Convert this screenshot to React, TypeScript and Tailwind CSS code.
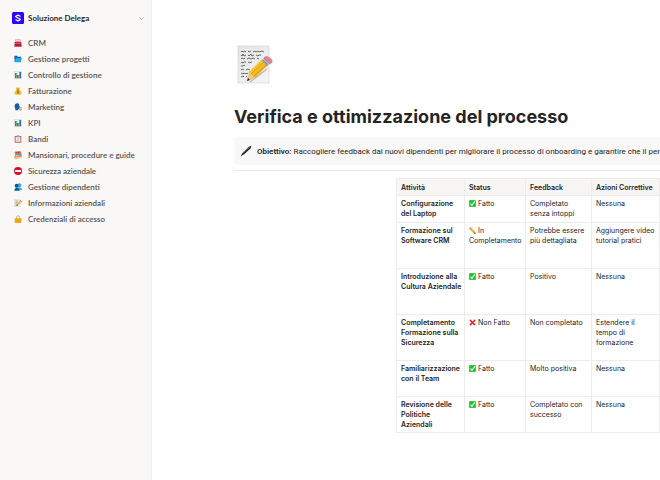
import type { ReactNode } from "react";
import { ChevronDown } from "lucide-react";

function Glyph({ className, children }: { className: string; children: ReactNode }) {
  return (
    <svg viewBox="0 0 24 24" className={`shrink-0 ${className}`} aria-hidden="true">
      {children}
    </svg>
  );
}

const chart = (
  <>
    <path d="M1 1h22v22H1z" fill="#eef3f5" stroke="#b9c8cd" strokeWidth="1.5" />
    <path d="M3 6h5v16H3z" fill="#12a044" />
    <path d="M9 12h5v10H9z" fill="#e0303a" />
    <path d="M16 3h5v19h-5z" fill="#1b74c9" />
  </>
);

const icons = {
  crm: (
    <>
      <path d="M4 1h16v9H4z" fill="#e0959b" />
      <path d="M6 3h12v3H6z" fill="#f3d6d8" />
      <path d="M2 9h20l1 14H1z" fill="#bd1e35" />
      <path d="M2 13h20" stroke="#ec8d97" strokeWidth="2" />
      <path d="M9 16h6v3H9z" fill="#8c1428" />
    </>
  ),
  folder: (
    <>
      <path d="M1 2h8l2 3h10v16H2z" fill="#0669a8" />
      <path d="M6 9h18l-4 13H2z" fill="#22a7f0" />
    </>
  ),
  chart,
  money: (
    <>
      <path d="M8 1l3 2 4-2 2 1-2 5H9L6 2z" fill="#e3a72f" />
      <path d="M9 7h6c4 3 8 8 8 12 0 3-2 4-5 4H6c-3 0-5-1-5-4 0-4 4-9 8-12z" fill="#f2bd35" />
      <path d="M8 7h8" stroke="#a76d13" strokeWidth="2" />
      <path d="M15 12c-5-2-7 2-3 3s3 5-3 3M12 10v10" fill="none" stroke="#8a5a15" strokeWidth="2" />
    </>
  ),
  speaking: (
    <>
      <path d="M11 1C4 1 1 6 2 11c0 3 2 4 2 7v4h8v-3h4v-5l2-2-2-3C16 4 15 1 11 1z" fill="#1561a6" />
      <path d="M17 15l6-2M17 18l7 0M16 20l6 3" stroke="#b5622f" strokeWidth="2" />
    </>
  ),
  clipboard: (
    <>
      <rect x="2" y="3" width="20" height="20" rx="2" fill="#d95e4c" />
      <path d="M5 6h14v14H5z" fill="#f2f5f7" />
      <path d="M8 1h8v6H8z" fill="#92a4ae" />
      <path d="M8 11h8M8 14h8M8 17h5" stroke="#9cacb7" strokeWidth="1.5" />
    </>
  ),
  books: (
    <>
      <path d="M2 2l17-1 3 4-17 2z" fill="#ba4a3f" />
      <path d="M2 3l3 4 17-2v4L5 11 2 7z" fill="#df7058" />
      <path d="M4 10l17-2 2 3v4L6 17l-2-3z" fill="#477fae" />
      <path d="M6 12l16-1v2L6 15z" fill="#f2ead7" />
      <path d="M1 16l18-2 4 3v4L5 23l-4-3z" fill="#e48b37" />
      <path d="M5 19l17-1v2L5 21z" fill="#fff2d7" />
    </>
  ),
  noEntry: (
    <>
      <circle cx="12" cy="12" r="12" fill="#d90d2b" />
      <rect x="3" y="9" width="18" height="6" rx="1" fill="#fff" />
    </>
  ),
  people: (
    <>
      <circle cx="16" cy="7" r="6" fill="#35aff2" />
      <path d="M10 14c7-3 13 0 14 7H10z" fill="#35aff2" />
      <circle cx="8" cy="8" r="6" fill="#075b91" />
      <path d="M1 23c0-12 15-12 16 0z" fill="#075b91" />
    </>
  ),
  memo: (
    <>
      <path d="M1 2h17v21H1z" fill="#eef1f3" stroke="#aeb7bd" />
      <path d="M4 6h10M4 10h8M4 14h5M4 18h4" stroke="#717b82" strokeWidth="1.5" />
      <path d="M9 15L18 5l4 4-10 10-4 1z" fill="#f0b41e" />
      <path d="M18 5l2-2 4 4-2 2z" fill="#e66c78" />
      <path d="M9 15l3 4-5 2z" fill="#444" />
    </>
  ),
  lock: (
    <>
      <path d="M7 12V8c0-7 10-7 10 0v4" fill="none" stroke="#a9a9a7" strokeWidth="3" />
      <rect x="2" y="10" width="20" height="14" rx="3" fill="#f6a313" />
    </>
  ),
  check: (
    <>
      <rect x="1" y="1" width="22" height="22" rx="2" fill="#12c52b" stroke="#079120" />
      <path d="M5 12l5 6L20 5" fill="none" stroke="#fff" strokeWidth="4" />
    </>
  ),
  cross: <path d="M2 5l3-3 7 7 7-7 3 3-7 7 7 7-3 3-7-7-7 7-3-3 7-7z" fill="#e4172b" stroke="#e4172b" />,
  pencil: (
    <>
      <path d="M6 1l15 15 2 7-8-2L1 7z" fill="#f3bb1f" />
      <path d="M4 4l14 15" stroke="#c98a18" />
      <path d="M5 0L0 6l4 3 5-5z" fill="#e98b90" />
      <path d="M21 17l-4 4 6 2z" fill="#494035" />
    </>
  ),
};

type IconName = keyof typeof icons;

const pages: { icon: IconName; label: string }[] = [
  { icon: "crm", label: "CRM" },
  { icon: "folder", label: "Gestione progetti" },
  { icon: "chart", label: "Controllo di gestione" },
  { icon: "money", label: "Fatturazione" },
  { icon: "speaking", label: "Marketing" },
  { icon: "chart", label: "KPI" },
  { icon: "clipboard", label: "Bandi" },
  { icon: "books", label: "Mansionari, procedure e guide" },
  { icon: "noEntry", label: "Sicurezza aziendale" },
  { icon: "people", label: "Gestione dipendenti" },
  { icon: "memo", label: "Informazioni aziendali" },
  { icon: "lock", label: "Credenziali di accesso" },
];

type Row = {
  task: string;
  icon: IconName;
  status: string;
  feedback: string;
  action: string;
  height: string;
};

const rows: Row[] = [
  { task: "Configurazione del Laptop", icon: "check", status: "Fatto", feedback: "Completato senza intoppi", action: "Nessuna", height: "h-[27px]" },
  { task: "Formazione sul Software CRM", icon: "pencil", status: "In Completamento", feedback: "Potrebbe essere più dettagliata", action: "Aggiungere video tutorial pratici", height: "h-[46px]" },
  { task: "Introduzione alla Cultura Aziendale", icon: "check", status: "Fatto", feedback: "Positivo", action: "Nessuna", height: "h-[46px]" },
  { task: "Completamento Formazione sulla Sicurezza", icon: "cross", status: "Non Fatto", feedback: "Non completato", action: "Estendere il tempo di formazione", height: "h-[46px]" },
  { task: "Familiarizzazione con il Team", icon: "check", status: "Fatto", feedback: "Molto positiva", action: "Nessuna", height: "h-[36px]" },
  { task: "Revisione delle Politiche Aziendali", icon: "check", status: "Fatto", feedback: "Completato con successo", action: "Nessuna", height: "h-[36px]" },
];

const cell = "border border-[#ececeb] pr-0.5 pl-1 text-left";

function Sidebar() {
  return (
    <aside className="w-[152px] shrink-0 border-r border-[#f0efed] bg-[#f9f8f7] pt-3 font-['Lato',sans-serif] font-semibold">
      <button type="button" className="flex h-3 w-full items-center pr-1.5 pl-3 text-[8px] font-bold text-[#2b2a28]">
        <Glyph className="mr-1 size-3">
          <rect width="24" height="24" rx="3" fill="#2b08fa" />
          <path
            d="M17 9l-5-3-5 3 10 6-5 3-5-3"
            fill="none"
            stroke="#fff"
            strokeWidth="2.5"
            strokeLinejoin="round"
          />
        </Glyph>
        Soluzione Delega
        <ChevronDown className="ml-auto size-[7px] text-[#77756f]" />
      </button>
      <nav className="mt-[11px] text-[8px] leading-4 text-[#55534f]">
        {pages.map((page) => (
          <a key={page.label} href="#" className="flex h-4 items-center gap-1.5 pl-3.5 whitespace-nowrap">
            <Glyph className="size-2">{icons[page.icon]}</Glyph>
            {page.label}
          </a>
        ))}
      </nav>
    </aside>
  );
}

function MemoCover() {
  return (
    <svg viewBox="0 0 36 40" className="h-10 w-9" aria-hidden="true">
      <defs>
        <linearGradient id="paper" x2="1" y2="1">
          <stop stopColor="#e3e3e3" />
          <stop offset="1" stopColor="#f6f6f6" />
        </linearGradient>
        <linearGradient id="wood" x2="1" y2="1">
          <stop stopColor="#ffe047" />
          <stop offset="1" stopColor="#e59b0b" />
        </linearGradient>
      </defs>
      <path d="M1 1h31v37H1z" fill="url(#paper)" stroke="#d2d2d2" strokeWidth=".6" />
      <path
        d="M4 7l1-1 1 1 2-1 1 1m2-1 1 1 2-1m2 1 2-1 1 1 2-1 1 1 3-1 2 1M4 10l1 1 1-2 1 2 2-1m2 0 1 1 2-2 1 2 2-1m2 0 2 1 1-1 2 0M4 14l1-1 2 1 1-1m2 1 2-1 2 1 2-1 2 1m2-1 2 1M4 17l2 1 1-1 2 0m2 0 2 1 1-1 1 0M4 21h2l1-1 1 1M4 25l1-1 2 1m2 0 2-1 2 1M4 28l2 1 1-1 2 1 1-1 1 1M4 32l2-1 1 1m2-1 1 1"
        fill="none"
        stroke="#484848"
        strokeWidth=".8"
      />
      <path d="M13 37L30 24" stroke="#9a9a9a" strokeWidth="1.5" opacity=".6" />
      <path d="M12 27L25 14l6 6-13 13-8 3z" fill="url(#wood)" />
      <path d="M14 29l13-12M16 32l13-12" stroke="#d28b0d" strokeWidth=".7" />
      <path d="M12 27l6 6-8 3z" fill="#e9c897" />
      <path d="M11 33l2 2-3 1z" fill="#282828" />
      <path d="M25 15l2-2 6 5-3 3z" fill="#7d98ba" />
      <path d="M26 14l6 5" stroke="#c6d3e1" />
      <path d="M27 13c2-3 5-1 7 1 2 2 1 4-1 5z" fill="#e8848e" stroke="#cd6973" strokeWidth=".6" />
    </svg>
  );
}

export default function App() {
  return (
    <div className="flex min-h-screen bg-white font-['Inter',sans-serif] text-[#252423]">
      <Sidebar />
      <main className="min-w-0 flex-1 overflow-hidden pt-[45px] pl-[82px]">
        <div className="pl-[3px]">
          <MemoCover />
        </div>
        <h1 className="mt-5 text-[18px] leading-6 font-bold whitespace-nowrap">
          Verifica e ottimizzazione del processo
        </h1>
        <section className="mt-2 flex h-7 items-center gap-[5px] rounded-l bg-[#f9f8f7] pl-1.5 font-['Roboto',sans-serif] text-[8px] whitespace-nowrap">
          <svg viewBox="0 0 24 24" className="size-3 shrink-0" aria-hidden="true">
            <path d="M1 23l4-7L17 4l6-3-2 6L9 18z" fill="#252a2e" />
            <path d="M7 15L20 3" stroke="#7b858c" strokeWidth="1.5" />
          </svg>
          <p className="pt-px">
            <strong className="font-semibold">Obiettivo:</strong> Raccogliere feedback dai nuovi dipendenti per
            migliorare il processo di onboarding e garantire che il percorso
          </p>
        </section>
        <hr className="mt-[5px] border-[#e9e9e7]" />
        <table className="mt-[7px] ml-[162px] w-[263px] table-fixed border-collapse text-[7px] leading-[10px]">
          <colgroup>
            <col className="w-[68px]" />
            <col className="w-[61px]" />
            <col className="w-[66px]" />
            <col className="w-[68px]" />
          </colgroup>
          <thead>
            <tr className="h-[17px] bg-[#f7f6f5]">
              {["Attività", "Status", "Feedback", "Azioni Correttive"].map((title) => (
                <th key={title} scope="col" className={`${cell} pt-px align-middle font-semibold whitespace-nowrap`}>
                  {title}
                </th>
              ))}
            </tr>
          </thead>
          <tbody className="align-top">
            {rows.map((row) => (
              <tr key={row.task} className={row.height}>
                <th scope="row" className={`${cell} pt-[3px] font-semibold`}>
                  {row.task}
                </th>
                <td className={`${cell} pt-[3px]`}>
                  <Glyph className="mr-0.5 inline size-[7px] align-[-1px]">{icons[row.icon]}</Glyph>
                  {row.status}
                </td>
                <td className={`${cell} pt-[3px]`}>{row.feedback}</td>
                <td className={`${cell} pt-[3px]`}>{row.action}</td>
              </tr>
            ))}
          </tbody>
        </table>
      </main>
    </div>
  );
}
